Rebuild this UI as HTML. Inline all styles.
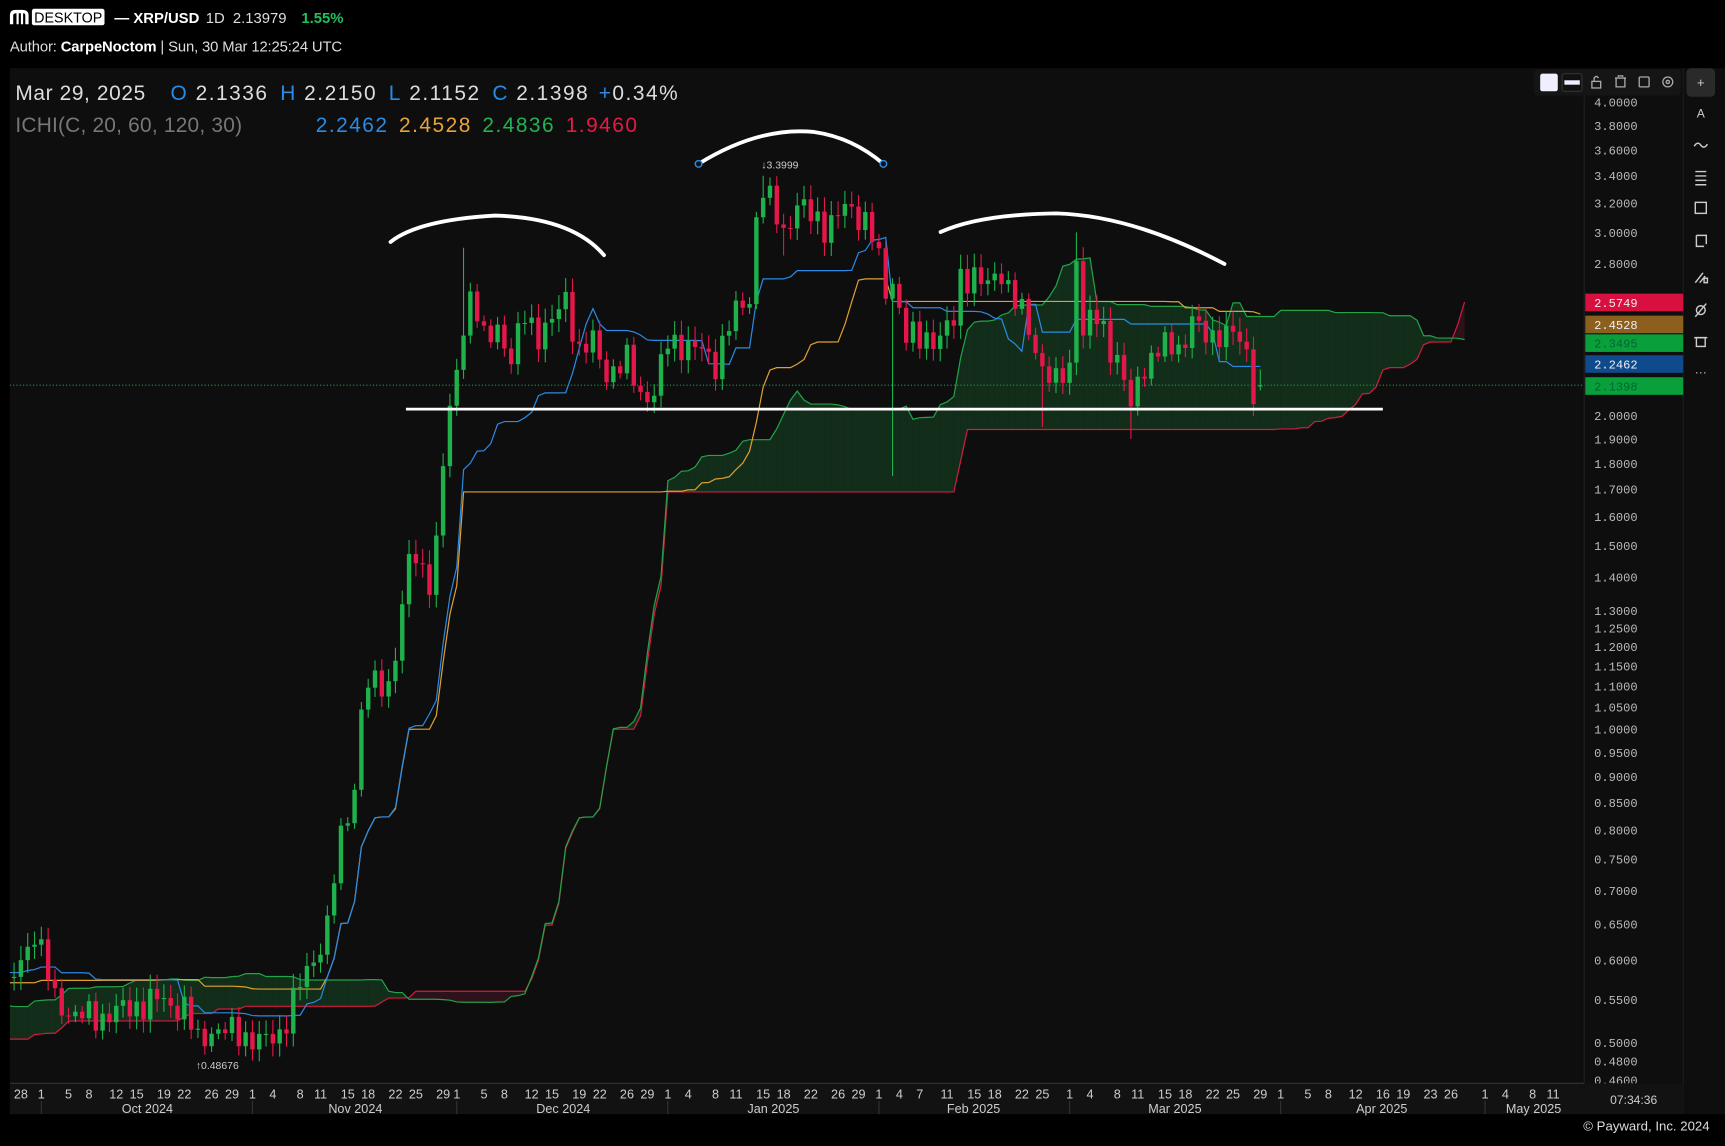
<!DOCTYPE html>
<html><head><meta charset="utf-8"><style>
html,body{margin:0;padding:0;background:#000;width:1725px;height:1146px;overflow:hidden}
svg{display:block}
text{font-family:"Liberation Sans",sans-serif}
.m{font-family:"Liberation Mono","DejaVu Sans Mono",monospace}
</style></head><body>
<svg id="s" width="1725" height="1146" viewBox="0 0 1568 1042" preserveAspectRatio="none" xmlns="http://www.w3.org/2000/svg">
<rect x="0" y="0" width="1568" height="1042" fill="#000"/>
<rect x="9" y="62" width="1559" height="951" fill="#0e0e0e"/>
<g id="chart" clip-path="url(#cp)"></g>
<defs><clipPath id="cp"><rect x="9" y="62" width="1431" height="923"/></clipPath></defs>
<g>
<path d="M9 22 V14 Q9 9 14 9 H20 Q26 9 26 14 V22 H23 V14 Q23 12 21 12 V22 H19 V12 H17 V22 H15 V12 Q12 12 12 14 V22 Z" fill="#fff"/>
<rect x="29" y="8" width="66" height="15" rx="2" fill="#fff"/>
<text x="31" y="20.5" font-size="13" fill="#000" textLength="62">DESKTOP</text>
<text x="104" y="21" font-size="13.5" fill="#fff" font-weight="bold">— XRP/USD</text>
<text x="187" y="21" font-size="13.5" fill="#ddd">1D&#160;&#160;2.13979</text>
<text x="274" y="21" font-size="13.5" fill="#22c05a" font-weight="bold">1.55%</text>
<text x="9" y="47" font-size="13.5" fill="#ddd" textLength="302">Author: <tspan font-weight="bold" fill="#fff">CarpeNoctom</tspan> | Sun, 30 Mar 12:25:24 UTC</text>
</g>
<text x="14" y="91" font-size="19" fill="#ddd" textLength="118">Mar 29, 2025</text>
<text x="155" y="91" font-size="19" fill="#ddd" textLength="461"><tspan fill="#2a8ae6">O</tspan> 2.1336 <tspan dx="4" fill="#2a8ae6">H</tspan> 2.2150 <tspan dx="4" fill="#2a8ae6">L</tspan> 2.1152 <tspan dx="4" fill="#2a8ae6">C</tspan> 2.1398 <tspan dx="2" fill="#2a8ae6">+</tspan>0.34%</text>
<text x="14" y="120" font-size="19" fill="#777" textLength="206">ICHI(C, 20, 60, 120, 30)</text>
<text x="287" y="120" font-size="19" textLength="292"><tspan fill="#2a8ae6">2.2462</tspan> <tspan dx="3" fill="#e8a43a">2.4528</tspan> <tspan dx="3" fill="#22b350">2.4836</tspan> <tspan dx="3" fill="#e51a48">1.9460</tspan></text>
<rect x="1394" y="63" width="134" height="24" rx="4" fill="#151515"/>
<rect x="1400" y="67" width="16" height="16" rx="2" fill="#eef0ff"/>
<rect x="1420" y="67" width="18" height="16" rx="2" fill="#111" stroke="#333"/>
<rect x="1422" y="73" width="14" height="4" fill="#eef0ff"/>
<g fill="none" stroke="#aaa" stroke-width="1.2">
<rect x="1447" y="74" width="8" height="6"/><path d="M1449 74 V71 Q1451 68 1453 71"/>
<path d="M1468 71 H1478 M1469 71 V79 H1477 V71 M1471 70 V69 H1475 V70"/>
<rect x="1490" y="70" width="9" height="9" rx="1"/>
<circle cx="1516" cy="74.5" r="4.5"/><circle cx="1516" cy="74.5" r="1.5"/>
</g>
<rect x="1533" y="62" width="26" height="26" rx="4" fill="#2a2a2a"/>
<text x="1546" y="79" font-size="12" fill="#ccc" text-anchor="middle">+</text>
<g fill="none" stroke="#ccc" stroke-width="1.3">
<text x="1546" y="107" font-size="11" fill="#ccc" stroke="none" text-anchor="middle">A</text>
<path d="M1540 133 Q1543 128 1546 132 Q1549 136 1552 131"/>
<path d="M1541 156 H1551 M1541 160 H1551 M1541 164 H1551 M1541 168 H1551"/>
<rect x="1541" y="184" width="10" height="10"/>
<path d="M1542 214 H1551 V222 M1542 214 V224 H1549"/>
<path d="M1541 257 L1548 248 M1545 257 L1550 251 M1549 253 h3 v4 h-3z"/>
<circle cx="1546" cy="282" r="4"/><path d="M1541 288 L1551 276"/>
<rect x="1542" y="307" width="8" height="8"/><path d="M1540 307 H1552"/>
<text x="1546" y="342" font-size="11" fill="#ccc" stroke="none" text-anchor="middle">···</text>
</g>
<g id="axis"></g>
<text x="1554" y="1028" font-size="12" fill="#ddd" text-anchor="end">© Payward, Inc. 2024</text>
</svg>
<script>
(function(){
var NS="http://www.w3.org/2000/svg";
var chart=document.getElementById('chart'),axis=document.getElementById('axis');
function el(p,tag,a,txt){var e=document.createElementNS(NS,tag);for(var k in a)e.setAttribute(k,a[k]);if(txt!=null)e.textContent=txt;p.appendChild(e);return e;}
function Y(p){return 663-285*Math.log2(p);}
function X(d){return 19+d*6.19;}
var keys=[[0,.60],[2,.64],[5,.55],[8,.53],[12,.53],[16,.54],[20,.55],[24,.54],[26,.50],[28,.515],[32,.51],[36,.50],[38,.51],[40,.55],[43,.60],[45,.65],[46,.72],[47,.78],[49,.88],[50,1.05],[51,1.1],[54,1.1],[56,1.3],[57,1.45],[58,1.45],[60,1.40],[61,1.5],[62,1.8],[63,2.0],[65,2.45],[66,2.6],[67,2.5],[68,2.35],[70,2.45],[72,2.25],[74,2.5],[76,2.4],[78,2.45],[80,2.6],[82,2.3],[84,2.35],[86,2.2],[89,2.25],[91,2.1],[93,2.1],[95,2.35],[97,2.35],[100,2.3],[102,2.25],[104,2.45],[107,2.6],[108,3.1],[109,3.3],[110,3.2],[112,3.0],[114,3.2],[116,3.1],[118,3.05],[121,3.15],[124,3.1],[125,3.0],[126,2.8],[127,2.6],[128,2.7],[130,2.4],[132,2.35],[135,2.4],[137,2.45],[138,2.7],[140,2.75],[142,2.65],[144,2.75],[146,2.6],[149,2.3],[150,2.25],[152,2.15],[154,2.2],[155,2.9],[156,2.4],[157,2.5],[159,2.4],[162,2.2],[163,2.0],[164,2.15],[167,2.35],[169,2.3],[171,2.35],[172,2.55],[173,2.4],[175,2.35],[177,2.45],[179,2.35],[180,2.25],[181,2.12],[182,2.14]];
function interp(d){for(var i=0;i<keys.length-1;i++){if(d>=keys[i][0]&&d<=keys[i+1][0]){var t=(d-keys[i][0])/(keys[i+1][0]-keys[i][0]);return keys[i][1]*(1-t)+keys[i+1][1]*t;}}return keys[keys.length-1][1];}
var PRE=130,N=183,bars=[];
for(var i=-PRE;i<N;i++){
 var c;
 if(i<0){c=0.46+0.14*(i+PRE)/PRE+0.03*Math.sin(i*0.21)+0.015*Math.sin(i*1.3);}
 else{c=interp(i)*(1+(i==182?0:0.025*Math.sin(i*2.7)+0.015*Math.sin(i*5.1)));}
 bars.push({d:i,c:c});
}
for(var j=0;j<bars.length;j++){var b=bars[j];b.o=j?bars[j-1].c:b.c;var r=0.012+0.02*Math.abs(Math.sin(j*3.3));b.h=Math.max(b.o,b.c)*(1+r);b.l=Math.min(b.o,b.c)*(1-r*0.9);}
function B(d){return bars[d+PRE];}
var lb=B(182);lb.o=2.1336;lb.h=2.215;lb.l=2.1152;lb.c=2.1398;
B(65).h=2.9;B(109).h=3.4;B(128).l=1.75;B(155).h=3.0;B(163).l=1.9;B(27).l=0.487;B(150).l=1.95;B(112).l=2.85;
function hl(j,n){var h=-1,l=1e9;for(var k=Math.max(0,j-n+1);k<=j;k++){h=Math.max(h,bars[k].h);l=Math.min(l,bars[k].l);}return (h+l)/2;}
var ten=[],kij=[],sa=[],sb=[];
for(var j=0;j<bars.length;j++){var t=hl(j,20),k=hl(j,60);ten.push([bars[j].d,t]);kij.push([bars[j].d,k]);sa.push([bars[j].d+30,(t+k)/2]);sb.push([bars[j].d+30,hl(j,120)]);}
for(var j=1;j<sa.length;j++){
 var a0=sa[j-1],a1=sa[j],b0=sb[j-1],b1=sb[j];if(a1[0]<-5)continue;
 var g=(a0[1]+a1[1])>=(b0[1]+b1[1]);
 el(chart,'polygon',{points:X(a0[0])+','+Y(a0[1])+' '+X(a1[0])+','+Y(a1[1])+' '+X(b1[0])+','+Y(b1[1])+' '+X(b0[0])+','+Y(b0[1]),fill:g?'#143a1f':'#3a1420','fill-opacity':'0.75'});
}
function line(arr,col){var p=[];arr.forEach(function(q){if(q[0]>-5)p.push(X(q[0]).toFixed(1)+','+Y(q[1]).toFixed(1));});el(chart,'polyline',{points:p.join(' '),fill:'none',stroke:col,'stroke-width':1.1});}
line(sb,'#d01c40');line(sa,'#22a347');line(kij,'#e0a030');line(ten,'#2a8ae6');
el(chart,'line',{x1:9,x2:1440,y1:Y(2.1398),y2:Y(2.1398),stroke:'#1fa24a','stroke-dasharray':'1 2','stroke-width':1});
bars.forEach(function(b){if(b.d<-2)return;var x=X(b.d),up=b.c>=b.o,col=up?'#1fb14c':'#e3174a';
 el(chart,'line',{x1:x,x2:x,y1:Y(b.h),y2:Y(b.l),stroke:col,'stroke-width':1});
 var y1=Y(Math.max(b.o,b.c)),y2=Y(Math.min(b.o,b.c));el(chart,'rect',{x:x-2,y:y1,width:4,height:Math.max(1,y2-y1),fill:col});});
el(chart,'text',{x:178,y:972,'font-size':9.5,fill:'#ccc'},'↑0.48676');
el(chart,'text',{x:692,y:153,'font-size':9.5,fill:'#ccc'},'↓3.3999');
var dw={fill:'none',stroke:'#fff','stroke-width':3.5,'stroke-linecap':'round'};
el(chart,'path',Object.assign({d:'M355 220 Q380 200 450 196 Q520 198 549 232'},dw));
el(chart,'path',Object.assign({d:'M635 149 Q690 115 740 120 Q775 125 803 149'},dw));
el(chart,'path',Object.assign({d:'M855 211 Q890 195 960 194 Q1030 196 1113 240'},dw));
el(chart,'line',{x1:369,x2:1257,y1:372,y2:372,stroke:'#fff','stroke-width':2.5});
el(chart,'circle',{cx:635,cy:149,r:3,fill:'#111',stroke:'#2a8ae6','stroke-width':1.3});
el(chart,'circle',{cx:803,cy:149,r:3,fill:'#111',stroke:'#2a8ae6','stroke-width':1.3});
el(axis,'line',{x1:1440,x2:1440,y1:88,y2:985,stroke:'#222'});
el(axis,'line',{x1:1530,x2:1530,y1:62,y2:1013,stroke:'#1c1c1c'});
[4,3.8,3.6,3.4,3.2,3,2.8,2,1.9,1.8,1.7,1.6,1.5,1.4,1.3,1.25,1.2,1.15,1.1,1.05,1,.95,.9,.85,.8,.75,.7,.65,.6,.55,.5,.48,.46].forEach(function(v){var y=Y(v);el(axis,'text',{x:1449,y:y+4,'font-size':11,fill:'#bbb','class':'m'},v.toFixed(4));});
[['2.5749','#d8103f',275],['2.4528','#8c5f1e',295],['2.3495','#09a03c',312],['2.2462','#0e4a8c',331],['2.1398','#09a03c',351]].forEach(function(t){el(axis,'rect',{x:1441,y:t[2]-8,width:89,height:16,fill:t[1]});el(axis,'text',{x:1449,y:t[2]+4,'font-size':11,fill:t[1]=='#09a03c'?'#063':'#eee','class':'m'},t[0]);});
el(axis,'rect',{x:9,y:985,width:1431,height:28,fill:'#121212'});
el(axis,'line',{x1:9,x2:1440,y1:985,y2:985,stroke:'#333'});
el(axis,'rect',{x:1440,y:985,width:90,height:28,fill:'#121212'});
el(axis,'text',{x:1485,y:1004,'font-size':11,fill:'#ccc','text-anchor':'middle'},'07:34:36');
var start=new Date(2024,8,28);
var sets={8:[28],9:[1,5,8,12,15,19,22,26,29],10:[1,4,8,11,15,18,22,25,29],11:[1,5,8,12,15,19,22,26,29],0:[1,4,8,11,15,18,22,26,29],1:[1,4,7,11,15,18,22,25],2:[1,4,8,11,15,18,22,25,29],3:[1,5,8,12,16,19,23,26],4:[1,4,8,11]};
for(var d=0;d<=228;d++){var dt=new Date(start.getTime()+d*86400000+3600000*12);var dd=dt.getDate();var m=dt.getMonth();
 if(sets[m]&&sets[m].indexOf(dd)>=0){el(axis,'text',{x:X(d),y:999,'font-size':11.5,fill:'#ccc','text-anchor':'middle'},String(dd));
  if(dd==1){el(axis,'line',{x1:X(d),x2:X(d),y1:1001,y2:1013,stroke:'#333'});}}
}
[['Oct 2024',134],['Nov 2024',323],['Dec 2024',512],['Jan 2025',703],['Feb 2025',885],['Mar 2025',1068],['Apr 2025',1256],['May 2025',1394]].forEach(function(t){el(axis,'text',{x:t[1],y:1012,'font-size':11.5,fill:'#ccc','text-anchor':'middle'},t[0]);});
})();
</script>
</body></html>
